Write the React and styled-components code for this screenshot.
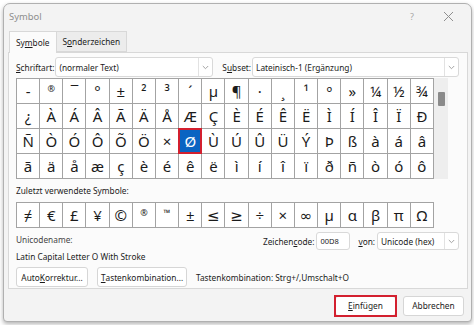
import React from 'react';
import styled, { createGlobalStyle } from 'styled-components';

const GlobalStyle = createGlobalStyle`
  html, body { margin: 0; padding: 0; background: #ffffff; }
  body {
    font-family: "Noto Sans", "Open Sans", sans-serif;
    font-size: 8.3px;
    color: #1b1b1b;
    width: 474px;
    height: 325px;
    overflow: hidden;
  }
  * { box-sizing: border-box; }
`;

const Window = styled.div`
  margin: 3px 0 0 3px;
  width: 469px;
  height: 319px;
  background: #f3f3f3;
  border: 1px solid #b0b0b0;
  border-radius: 7px 7px 4px 4px;
  box-shadow: 0 2px 4px rgba(0, 0, 0, 0.3);
  display: flex;
  flex-direction: column;
  overflow: hidden;
`;

const TitleBar = styled.div`
  height: 25px;
  display: flex;
  align-items: center;
  padding-left: 5px;
`;

const Title = styled.div`
  flex: 1;
  font-size: 9.4px;
  color: #8e8e8e;
`;

const TitleButton = styled.div`
  width: ${p => p.$w}px;
  height: 25px;
  display: flex;
  align-items: center;
  justify-content: center;
  color: #a8a8a8;
  font-size: 9px;
`;

const Content = styled.div`
  flex: 1;
  display: flex;
  flex-direction: column;
  padding: 0 3px 0 4px;
`;

const Tabs = styled.div`
  display: flex;
  margin-top: 2px;
  padding-left: 1px;
  height: 21px;
  position: relative;
  z-index: 1;
`;

const Tab = styled.div`
  height: ${p => (p.$active ? 22 : 21)}px;
  padding: 0 ${p => p.$pad}px;
  display: flex;
  align-items: center;
  white-space: nowrap;
  background: ${p => (p.$active ? '#fbfbfb' : '#ececec')};
  border: 1px solid #d8d8d8;
  border-bottom: ${p => (p.$active ? 'none' : '1px solid #d8d8d8')};
  border-left: ${p => (p.$active ? '1px solid #d8d8d8' : 'none')};
  color: #1b1b1b;
`;

const Panel = styled.div`
  height: 237px;
  background: #fbfbfb;
  border: 1px solid #d8d8d8;
  padding: 4px 8px 0 7px;
  display: flex;
  flex-direction: column;
`;

const FontRow = styled.div`
  display: flex;
  align-items: center;
  height: 20px;
`;

const Label = styled.span`
  white-space: nowrap;
  margin-left: ${p => p.$ml || 0}px;
  margin-right: ${p => p.$mr || 0}px;
`;

const Field = styled.div`
  width: ${p => p.$w}px;
  height: ${p => p.$h || 20}px;
  background: #ffffff;
  border: 1px solid #d9d9d9;
  border-radius: 3px;
  display: flex;
  align-items: center;
  font-size: ${p => p.$fs || 8.3}px;
  overflow: hidden;
`;

const FieldText = styled.div`
  flex: 1;
  padding-left: 3px;
  white-space: nowrap;
`;

const DropBtn = styled.div`
  width: 14px;
  height: 100%;
  border-left: 1px solid #e2e2e2;
  display: flex;
  align-items: center;
  justify-content: center;
`;

const GridArea = styled.div`
  display: flex;
  margin-top: 1px;
`;

const SymbolGrid = styled.div`
  width: 418px;
  display: grid;
  grid-template-columns: repeat(18, 1fr);
  grid-auto-rows: 25px;
  border-top: 1px solid #a3a3a3;
  border-left: 1px solid #a3a3a3;
`;

const Cell = styled.div`
  position: relative;
  border-right: 1px solid #a3a3a3;
  border-bottom: 1px solid #a3a3a3;
  background: ${p => (p.$sel ? '#0a64c2' : '#ffffff')};
  color: ${p => (p.$sel ? '#ffffff' : '#1b1b1b')};
  display: flex;
  align-items: ${p => (p.$top ? 'flex-start' : 'center')};
  padding-top: ${p => (p.$top ? 5 : 0)}px;
  justify-content: center;
  font-family: "Noto Sans", "DejaVu Sans", sans-serif;
  font-size: ${p => p.$fs || 15}px;
  line-height: 1;
`;

const RedMark = styled.div`
  position: absolute;
  inset: ${p => p.$inset}px;
  border: 2px solid #d3202f;
  pointer-events: none;
`;

const ScrollTrack = styled.div`
  width: 14px;
  background: #eeeeee;
  display: flex;
  justify-content: center;
  padding-top: 14px;
`;

const Thumb = styled.div`
  width: 7px;
  height: 14px;
  background: #8a8a8a;
  border-radius: 1px;
`;

const SectionLabel = styled.div`
  margin-top: 4px;
  height: 16px;
  line-height: 16px;
`;

const RecentGrid = styled(SymbolGrid)`
  margin-top: 3px;
`;

const InfoArea = styled.div`
  display: flex;
  justify-content: space-between;
  margin-top: 3px;
`;

const InfoCol = styled.div`
  display: flex;
  flex-direction: column;
`;

const InfoLine = styled.div`
  height: 17px;
  line-height: 17px;
  color: ${p => (p.$muted ? '#444' : '#1b1b1b')};
`;

const CodeRow = styled.div`
  display: flex;
  align-items: center;
  margin-top: 1px;
  height: 18px;
`;

const ButtonRow = styled.div`
  display: flex;
  align-items: center;
  margin-top: 2px;
  gap: 9px;
`;

const Button = styled.div`
  position: relative;
  width: ${p => p.$w}px;
  height: 20px;
  background: #ffffff;
  border: 1px solid #d6d6d6;
  border-radius: 3px;
  display: flex;
  align-items: center;
  justify-content: center;
  white-space: nowrap;
`;

const ShortcutText = styled.span`
  white-space: nowrap;
`;

const Footer = styled.div`
  flex: 1;
  display: flex;
  align-items: center;
  justify-content: flex-end;
  gap: 7px;
  padding: 1px 4px 0 0;
`;

const Chevron = () => (
  <svg width="7" height="5" viewBox="0 0 7 5">
    <path d="M0.8 1 L3.5 3.7 L6.2 1" fill="none" stroke="#9a9a9a" strokeWidth="0.9" />
  </svg>
);

const CloseIcon = () => (
  <svg width="11" height="11" viewBox="0 0 11 11">
    <path d="M1 1 L10 10 M10 1 L1 10" stroke="#8f8f8f" strokeWidth="1" fill="none" />
  </svg>
);

const rows = [
  ['-', '®', '¯', '°', '±', '²', '³', '´', 'µ', '¶', '·', '¸', '¹', 'º', '»', '¼', '½', '¾'],
  ['¿', 'À', 'Á', 'Â', 'Ã', 'Ä', 'Å', 'Æ', 'Ç', 'È', 'É', 'Ê', 'Ë', 'Ì', 'Í', 'Î', 'Ï', 'Ð'],
  ['Ñ', 'Ò', 'Ó', 'Ô', 'Õ', 'Ö', '×', 'Ø', 'Ù', 'Ú', 'Û', 'Ü', 'Ý', 'Þ', 'ß', 'à', 'á', 'â'],
  ['ã', 'ä', 'å', 'æ', 'ç', 'è', 'é', 'ê', 'ë', 'ì', 'í', 'î', 'ï', 'ð', 'ñ', 'ò', 'ó', 'ô'],
];

const small = new Set(['®']);

const recent = ['≠', '€', '£', '¥', '©', '®', '™', '±', '≤', '≥', '÷', '×', '∞', 'µ', 'α', 'β', 'π', 'Ω'];
const recentSmall = new Set(['®', '™']);

export default function App() {
  return (
    <>
      <GlobalStyle />
      <Window>
        <TitleBar>
          <Title>Symbol</Title>
          <TitleButton $w={26}>?</TitleButton>
          <TitleButton $w={46}><CloseIcon /></TitleButton>
        </TitleBar>
        <Content>
          <Tabs>
            <Tab $active $pad={6}>Sy<u>m</u>bole</Tab>
            <Tab $pad={6}>S<u>o</u>nderzeichen</Tab>
          </Tabs>
          <Panel>
            <FontRow>
              <Label $mr={1}><u>S</u>chriftart:</Label>
              <Field $w={158}>
                <FieldText>(normaler Text)</FieldText>
                <DropBtn><Chevron /></DropBtn>
              </Field>
              <Label $ml={9} $mr={1}>S<u>u</u>bset:</Label>
              <Field $w={207}>
                <FieldText>Lateinisch-1 (Ergänzung)</FieldText>
                <DropBtn><Chevron /></DropBtn>
              </Field>
            </FontRow>
            <GridArea>
              <SymbolGrid>
                {rows.map((r, ri) =>
                  r.map((ch, ci) => {
                    const sel = ri === 2 && ci === 7;
                    const sm = small.has(ch);
                    return (
                      <Cell key={`${ri}-${ci}`} $sel={sel} $top={sm} $fs={sm ? 9 : 15}>
                        {ch}
                        {sel && <RedMark $inset={-1} />}
                      </Cell>
                    );
                  })
                )}
              </SymbolGrid>
              <ScrollTrack><Thumb /></ScrollTrack>
            </GridArea>
            <SectionLabel>Zuletzt verwendete Symbole:</SectionLabel>
            <RecentGrid>
              {recent.map((ch, i) => {
                const sm = recentSmall.has(ch);
                return (
                  <Cell key={i} $top={sm} $fs={sm ? 9 : 15}>{ch}</Cell>
                );
              })}
            </RecentGrid>
            <InfoArea>
              <InfoCol>
                <InfoLine $muted>Unicodename:</InfoLine>
                <InfoLine>Latin Capital Letter O With Stroke</InfoLine>
              </InfoCol>
              <CodeRow>
                <Label $mr={2}>Zeichen<u>c</u>ode:</Label>
                <Field $w={34} $h={18} $fs={7.5}>
                  <FieldText>00D8</FieldText>
                </Field>
                <Label $ml={8} $mr={2}><u>v</u>on:</Label>
                <Field $w={82} $h={18}>
                  <FieldText>Unicode (hex)</FieldText>
                  <DropBtn><Chevron /></DropBtn>
                </Field>
              </CodeRow>
            </InfoArea>
            <ButtonRow>
              <Button $w={72}>Auto<u>K</u>orrektur...</Button>
              <Button $w={90}><u>T</u>astenkombination...</Button>
              <ShortcutText>Tastenkombination: Strg+/,Umschalt+O</ShortcutText>
            </ButtonRow>
          </Panel>
          <Footer>
            <Button $w={61}>
              <u>E</u>infügen
              <RedMark $inset={-2} />
            </Button>
            <Button $w={61}>Abbrechen</Button>
          </Footer>
        </Content>
      </Window>
    </>
  );
}
